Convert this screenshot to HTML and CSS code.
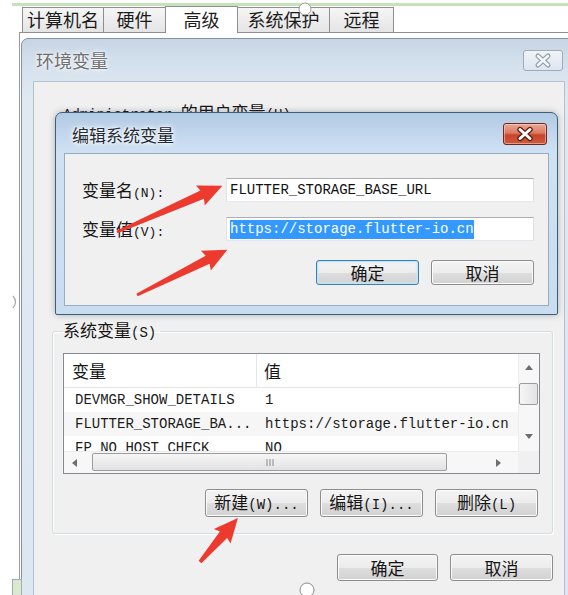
FILE: index.html
```html
<!DOCTYPE html>
<html lang="zh-CN">
<head>
<meta charset="utf-8">
<title>编辑系统变量</title>
<link rel="stylesheet" href="styles.css">
</head>
<body>
<div class="screen">
  <div class="topline"></div>
  <div class="sysprops">
    <div class="tabs">
      <div class="tab t1">计算机名</div>
      <div class="tab t2">硬件</div>
      <div class="tab t3 active">高级</div>
      <div class="tab t4">系统保护</div>
      <div class="tab t5">远程</div>
    </div>
    <div class="tab-page"></div>
  </div>

  <section class="win env">
    <header class="titlebar env-titlebar">
      <span class="title env-title">环境变量</span>
      <span class="close close-inactive">
        <svg width="38" height="19" viewBox="0 0 38 19"><path d="M14 5 L24 14 M24 5 L14 14" stroke="#8d9aa8" stroke-width="5" stroke-linecap="round"/><path d="M14 5 L24 14 M24 5 L14 14" stroke="#f4f7fa" stroke-width="2.6" stroke-linecap="round"/></svg>
      </span>
    </header>
    <div class="client env-client">
      <div class="user-section"><span class="mn">Administrator </span>的用户变量<span class="mn">(U)</span></div>
      <fieldset class="group">
        <legend>系统变量<span class="mn">(S)</span></legend>
        <div class="listview">
          <div class="lv-content">
            <div class="lv-header"><div class="c1">变量</div><div class="c2">值</div></div>
            <div class="lv-row"><div class="c1">DEVMGR_SHOW_DETAILS</div><div class="c2">1</div></div>
            <div class="lv-row alt"><div class="c1">FLUTTER_STORAGE_BA...</div><div class="c2">https://storage.flutter-io.cn</div></div>
            <div class="lv-row"><div class="c1">FP_NO_HOST_CHECK</div><div class="c2">NO</div></div>
          </div>
          <div class="vscroll">
            <div class="sb-btn"><svg width="8" height="5" viewBox="0 0 8 5"><path d="M0 5 L4 0 L8 5 Z" fill="#6d6d6d"/></svg></div>
            <div class="vthumb"></div>
            <div class="sb-btn sb-down"><svg width="8" height="5" viewBox="0 0 8 5"><path d="M0 0 L4 5 L8 0 Z" fill="#6d6d6d"/></svg></div>
          </div>
          <div class="hscroll">
            <div class="sb-btn"><svg width="5" height="8" viewBox="0 0 5 8"><path d="M5 0 L0 4 L5 8 Z" fill="#6d6d6d"/></svg></div>
            <div class="hthumb"><svg width="8" height="7" viewBox="0 0 8 7"><path d="M1 0 V7 M4 0 V7 M7 0 V7" stroke="#8a8a8a" stroke-width="1"/></svg></div>
            <div class="sb-btn sb-right"><svg width="5" height="8" viewBox="0 0 5 8"><path d="M0 0 L5 4 L0 8 Z" fill="#6d6d6d"/></svg></div>
          </div>
          <div class="corner"></div>
        </div>
        <div class="btn-row group-btns">
          <button class="btn">新建<span class="mn">(W)...</span></button>
          <button class="btn">编辑<span class="mn">(I)...</span></button>
          <button class="btn">删除<span class="mn">(L)</span></button>
        </div>
      </fieldset>
      <div class="btn-row dialog-btns">
        <button class="btn w101">确定</button>
        <button class="btn">取消</button>
      </div>
    </div>
  </section>

  <section class="win edit">
    <header class="titlebar edit-titlebar">
      <span class="title edit-title">编辑系统变量</span>
      <span class="close close-active">
        <svg width="42" height="20" viewBox="0 0 42 20"><path d="M16 5.5 L26 14.5 M26 5.5 L16 14.5" stroke="#5b1d12" stroke-width="5.4" stroke-linecap="round"/><path d="M16 5.5 L26 14.5 M26 5.5 L16 14.5" stroke="#ffffff" stroke-width="3" stroke-linecap="round"/></svg>
      </span>
    </header>
    <div class="client edit-client">
      <div class="field-grid">
        <label class="field-label">变量名<span class="mn sm">(N):</span></label>
        <div class="textbox">FLUTTER_STORAGE_BASE_URL</div>
        <label class="field-label">变量值<span class="mn sm">(V):</span></label>
        <div class="textbox"><span class="selected">https://storage.flutter-io.cn</span></div>
      </div>
      <div class="btn-row edit-btns">
        <button class="btn focused">确定</button>
        <button class="btn">取消</button>
      </div>
    </div>
  </section>

  <svg class="overlay" width="568" height="595" viewBox="0 0 568 595">
    <circle cx="305" cy="9" r="6" fill="#ffffff" stroke="#9c9c9c" stroke-width="1"/>
    <circle cx="307" cy="590" r="7" fill="#ffffff" stroke="#8c8c8c" stroke-width="1"/>
    <path d="M13 296 q5 6 0 12" fill="none" stroke="#a8a8a8" stroke-width="1.2"/>
    <rect x="12.5" y="579.5" width="9" height="16" fill="#dbe8d2" stroke="#a2acb0"/>
    <g fill="#ec3a2e">
      <polygon points="0,-1.5 93,-4.5 91,-11 115,0 91,11 93,4.5 0,1.5" transform="translate(117 232) rotate(-23.66)"/>
      <polygon points="0,-1.5 79,-4.5 77,-11 101,0 77,11 79,4.5 0,1.5" transform="translate(137 295) rotate(-26.57)"/>
      <polygon points="0,-1.8 36,-4.8 34,-11 58,0 34,11 36,4.8 0,1.8" transform="translate(200 562) rotate(-49.2)"/>
    </g>
  </svg>
</div>
</body>
</html>
```

FILE: styles.css
```css
* { box-sizing: border-box; }
html, body { margin: 0; padding: 0; }
body {
  width: 568px;
  height: 595px;
  overflow: hidden;
  background: #ffffff;
  font-family: "Noto Sans CJK SC", "Noto Sans", sans-serif;
  font-size: 17px;
  color: #161616;
}
.screen { position: relative; width: 568px; height: 595px; overflow: hidden; }

.mn { font-family: "Liberation Mono", "Noto Sans CJK SC", monospace; font-size: 14px; }
.mn.sm { font-size: 13px; }

/* background window: system properties */
.topline { margin: 3px 0 0 12px; height: 3px; background: #c6e2bd; }
.sysprops { margin: 2px 0 0 19px; }
.tabs {
  display: flex;
  align-items: flex-end;
  height: 25px;
  padding-left: 4px;
  border-bottom: 1px solid #8f8f8f;
}
.tab {
  height: 25px;
  margin-left: -1px;
  border: 1px solid #8f8f8f;
  border-bottom: none;
  background: linear-gradient(#f6f6f6, #e4e4e4);
  font-size: 18px;
  line-height: 23px;
  text-align: center;
  color: #1b1b1b;
}
.t1 { width: 82px; }
.t2 { width: 63px; }
.t3 { width: 73px; }
.t4 { width: 93px; }
.t5 { width: 65px; }
.tab.active {
  height: 27px;
  margin-bottom: -1px;
  background: #ffffff;
  position: relative;
  line-height: 24px;
}
.tab-page { height: 560px; border-left: 1px solid #9a9a9a; background: #ffffff; }

/* windows */
.win { position: absolute; }
.titlebar { display: flex; align-items: center; justify-content: space-between; }
.close { display: flex; align-items: center; justify-content: center; border-radius: 3px; }

.env {
  left: 21px;
  top: 38px;
  width: 556px;
  height: 575px;
  border: 1px solid #8494a6;
  border-radius: 7px 7px 0 0;
  background: linear-gradient(#c7d5e4 0, #d6e2ee 30px, #e0e9f2 60px, #dde7f1 100%);
  padding: 0 11px 0 11px;
  display: flex;
  flex-direction: column;
}
.env-titlebar { height: 42px; padding: 0 2px 0 3px; }
.env-title { color: #707070; font-size: 18px; text-shadow: 0 0 6px #ffffff, 0 0 3px #ffffff; }
.close-inactive {
  width: 40px;
  height: 21px;
  border: 1px solid #9eacba;
  background: linear-gradient(#f1f4f8, #dde5ee);
}
.env-client {
  flex: 1;
  background: #f0f0f0;
  border: 1px solid #b3c0cd;
  border-bottom: none;
}
.user-section {
  height: 238px;
  padding: 20px 0 0 29px;
  line-height: 20px;
  white-space: nowrap;
}

.group {
  margin: 0 0 0 18px;
  width: 501px;
  padding: 10px 12px 16px 10px;
  border: 1px solid #d5dde4;
  border-radius: 3px;
  box-shadow: inset 1px 1px 0 #ffffff, 1px 1px 0 #ffffff;
  min-width: 0;
}
.group legend { padding: 0 4px 0 0; line-height: 20px; }

.listview {
  width: 477px;
  height: 121px;
  border: 1px solid #868b93;
  background: #ffffff;
  display: grid;
  grid-template-columns: 454px 21px;
  grid-template-rows: 97px 22px;
}
.lv-content { overflow: hidden; }
.lv-header { display: flex; height: 34px; border-bottom: 1px solid #e6e6e6; line-height: 33px; }
.lv-header .c1 { width: 193px; padding-left: 8px; border-right: 1px solid #e6e6e6; }
.lv-header .c2 { padding-left: 7px; }
.lv-row {
  display: flex;
  height: 24px;
  line-height: 24px;
  font-family: "Liberation Mono", monospace;
  font-size: 14px;
  color: #1a1a1a;
  white-space: nowrap;
}
.lv-row.alt { background: #f6f6f6; }
.lv-row .c1 { width: 193px; padding-left: 11px; flex: none; }
.lv-row .c2 { padding-left: 8px; }

.vscroll { display: flex; flex-direction: column; background: #f7f7f7; border-left: 1px solid #ececec; }
.sb-btn { display: flex; align-items: center; justify-content: center; flex: none; }
.vscroll .sb-btn { height: 27px; }
.vscroll .sb-down { margin-top: auto; height: 29px; }
.vthumb {
  height: 22px;
  margin: 2px 1px 0 0;
  border: 1px solid #9c9c9c;
  border-radius: 2px;
  background: linear-gradient(90deg, #f6f6f6, #e3e3e3);
}
.hscroll { display: flex; align-items: stretch; background: #f7f7f7; border-top: 1px solid #ececec; }
.hscroll .sb-btn { width: 21px; }
.hscroll .sb-right { margin-left: auto; margin-right: 9px; }
.hthumb {
  width: 355px;
  margin: 1px 0 2px 7px;
  border: 1px solid #9c9c9c;
  border-radius: 2px;
  background: linear-gradient(#f6f6f6, #e2e2e2);
  display: flex;
  align-items: center;
  justify-content: center;
}
.corner { background: #f0f0f0; }

.btn-row { display: flex; justify-content: flex-end; gap: 12px; }
.btn {
  width: 103px;
  height: 28px;
  padding: 0;
  border: 1px solid #8d8d8d;
  border-radius: 3px;
  background: linear-gradient(#f4f4f4 0%, #ececec 50%, #dedede 51%, #d2d2d2 100%);
  box-shadow: inset 0 0 0 1px #fbfbfb;
  font-family: "Noto Sans CJK SC", sans-serif;
  font-size: 17px;
  line-height: 24px;
  color: #151515;
}
.btn .mn { font-size: 14px; }
.group-btns { margin-top: 15px; margin-right: 2px; }
.dialog-btns { margin-top: 20px; padding-right: 11px; }
.dialog-btns .btn { height: 27px; }
.w101 { width: 101px; }

/* edit dialog */
.edit {
  left: 55px;
  top: 112px;
  width: 503px;
  height: 203px;
  border: 1px solid #3b6075;
  border-radius: 7px 7px 2px 2px;
  background: linear-gradient(#b2cae4 0, #c3d7ed 22px, #d0e1f3 40px, #cadcf0 100%);
  padding: 0 8px 8px 8px;
  display: flex;
  flex-direction: column;
  box-shadow: 0 0 6px rgba(40, 60, 80, 0.35);
}
.edit-titlebar { height: 40px; padding: 2px 2px 0 8px; }
.edit-title { color: #1e2a36; text-shadow: 0 0 7px #ffffff, 0 0 4px #ffffff, 0 0 2px #ffffff; }
.close-active {
  width: 44px;
  height: 22px;
  border: 1px solid #6a2a1f;
  background: linear-gradient(#eaa898 0%, #db7a63 45%, #c8442a 55%, #cf5a3c 100%);
  box-shadow: inset 0 0 0 1px rgba(255, 220, 210, 0.5);
}
.edit-client {
  flex: 1;
  background: #f0f0f0;
  border: 1px solid #97acc2;
  padding: 24px 14px 0 17px;
}
.field-grid {
  display: grid;
  grid-template-columns: 144px 308px;
  grid-auto-rows: 24px;
  row-gap: 15px;
  align-items: center;
}
.field-label { height: 24px; line-height: 24px; white-space: nowrap; overflow: visible; }
.textbox {
  height: 24px;
  border: 1px solid;
  border-color: #abadb3 #dbdfe6 #e3e9ef #e2e3ea;
  background: #ffffff;
  padding-left: 3px;
  font-family: "Liberation Mono", monospace;
  font-size: 14px;
  line-height: 22px;
  color: #111111;
  white-space: nowrap;
}
.selected { background: #3399ff; color: #ffffff; padding: 1px 0 2px; }
.edit-btns { margin-top: 19px; }
.edit-btns .btn { height: 25px; line-height: 22px; }
.btn.focused {
  border-color: #3c7fb1;
  box-shadow: inset 0 0 0 1px #bfe2f7, inset 0 0 3px 1px #cfe8f8;
}

.overlay { position: absolute; left: 0; top: 0; pointer-events: none; }
```
